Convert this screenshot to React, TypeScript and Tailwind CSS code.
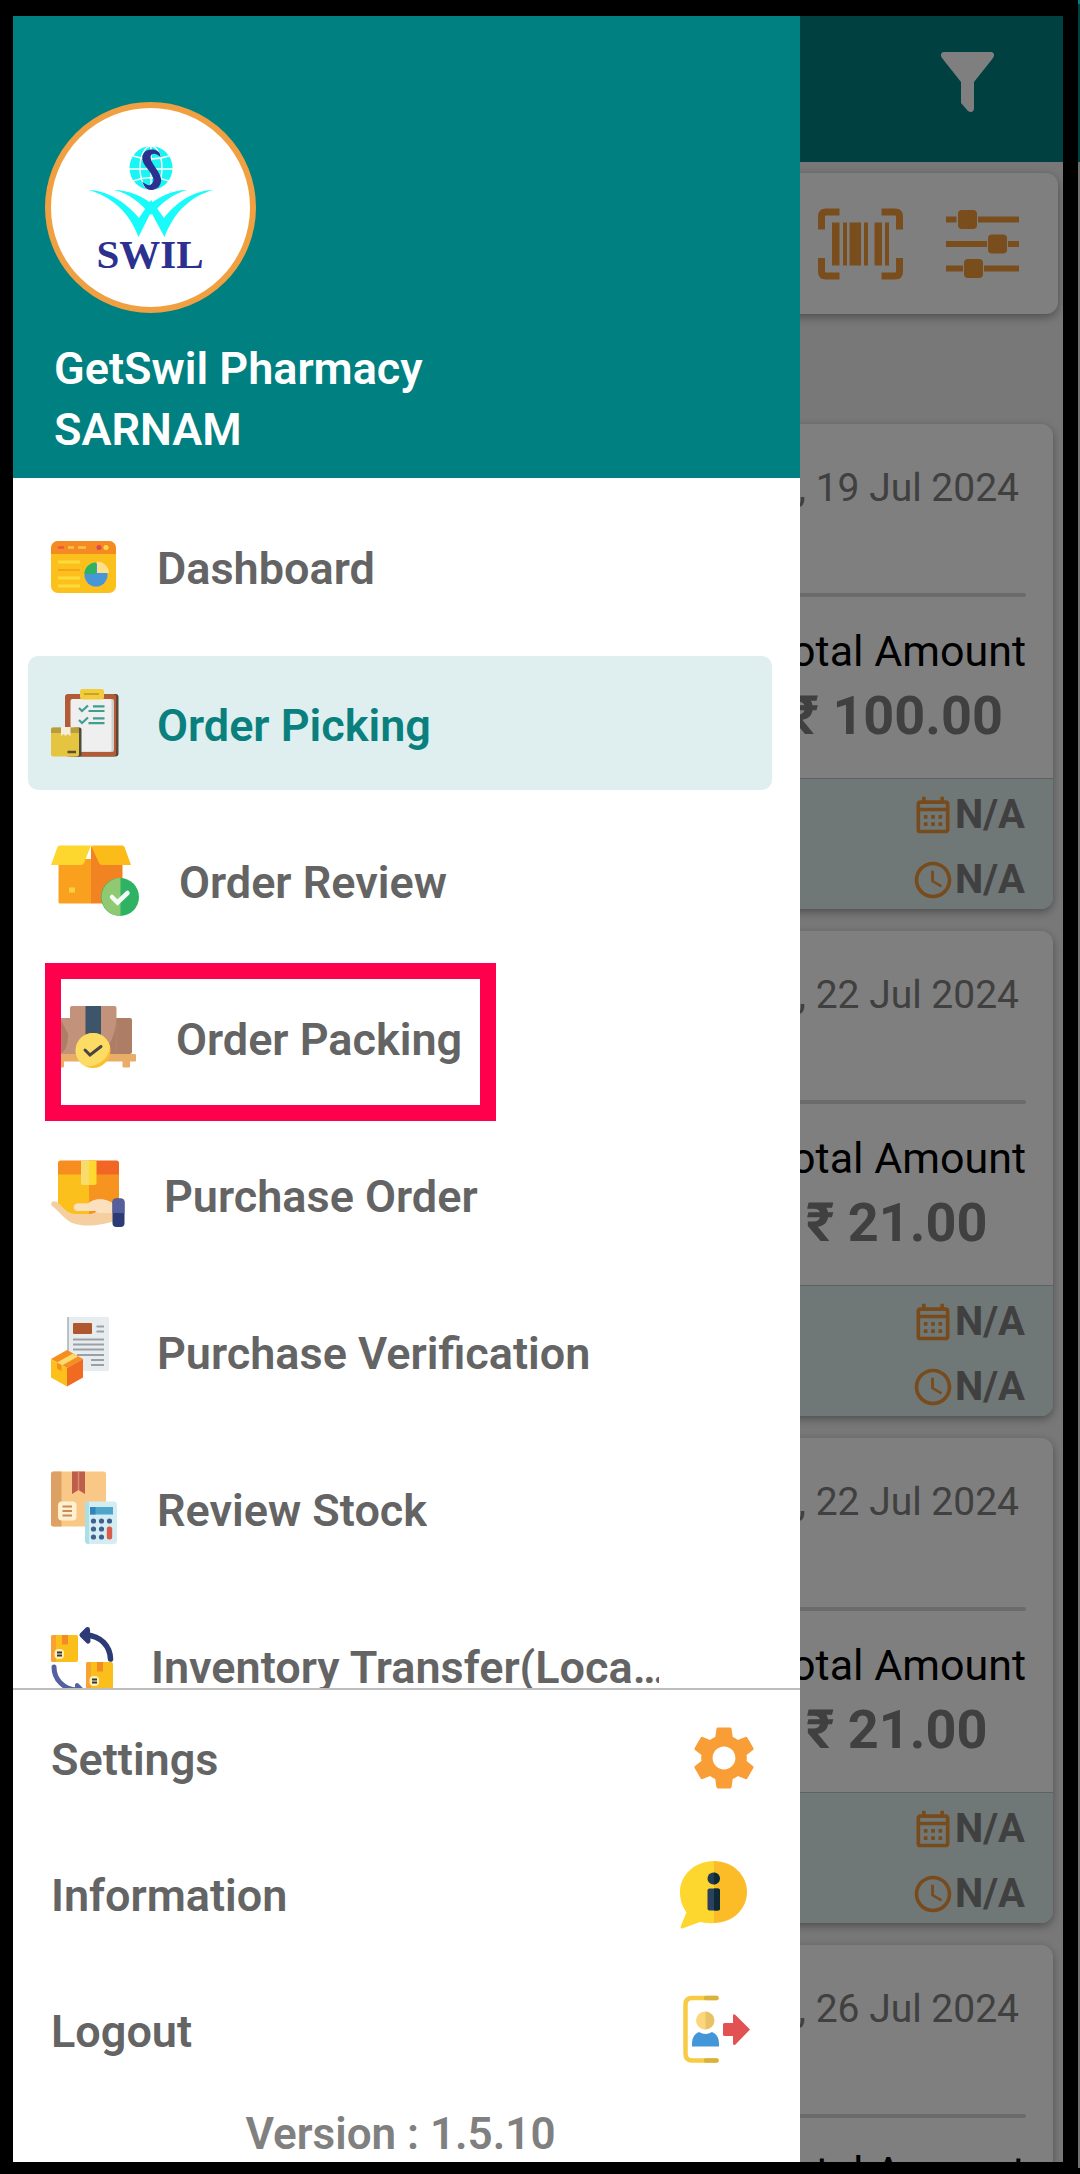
import type { ReactNode } from "react";
import {
  MdAccessTime,
  MdOutlineCalendarMonth,
  MdSettings,
} from "react-icons/md";

type MenuItem = {
  label: string;
  icon: ReactNode;
  active?: boolean;
  marked?: boolean;
};

type Order = {
  date: string;
  amount: string;
};

const orders: Order[] = [
  { date: ", 19 Jul 2024", amount: "₹ 100.00" },
  { date: ", 22 Jul 2024", amount: "₹ 21.00" },
  { date: ", 22 Jul 2024", amount: "₹ 21.00" },
  { date: ", 26 Jul 2024", amount: "₹ 21.00" },
];

function SwilLogo() {
  return (
    <svg viewBox="0 0 211 211" className="size-full" role="img" aria-label="SWIL">
      <circle cx="105.5" cy="105.5" r="102.5" fill="#fff" stroke="#f0a040" strokeWidth="6" />
      <ellipse cx="106" cy="66" rx="21.5" ry="22" fill="#19f5f5" />
      <g fill="none" stroke="#fff" strokeWidth="1.4">
        <ellipse cx="106" cy="66" rx="11" ry="22" />
        <path d="M84 67h44M88 54q18 6 36 0M88 79q18-7 36 0M106 44v44" />
      </g>
      <path
        d="M114 52.500C113 48 101 46 98.500 54C96 63 111 70 109.500 79C108.500 85 103 85 100 83C103 89 114 88 115 79C116 70 103 62 104.500 54C105.500 49.500 111 50 114 52.500Z"
        fill="#2c3190"
        stroke="#2c3190"
        strokeWidth="2.200"
      />
      <g fill="#19fbfb">
        <path d="M43.500 88C61 88 81 100 94 116L106 98L119 116C131 100 150 88 168 88C147 94 130 108 119.500 135L106 110L93.500 135C84 109 65 94 43.500 88Z" />
        <path d="M69 88C84 88 98 95 106 101C115 95 127 88 142 88C127 92 117 101 106 113C96 102 86 92 69 88Z" />
      </g>
      <text
        x="105"
        y="166"
        textAnchor="middle"
        className="fill-[#2c3190] font-['Liberation_Serif',serif] text-[41px] font-bold"
      >
        SWIL
      </text>
    </svg>
  );
}

function DashboardIcon() {
  return (
    <svg viewBox="0 0 75 82" className="h-[82px] w-[75px]" aria-hidden="true">
      <rect y="16" width="65" height="52" rx="7" fill="#fbc01c" />
      <path d="M0 29v-6a7 7 0 0 1 7-7h51a7 7 0 0 1 7 7v6z" fill="#f58a22" />
      <g strokeWidth="2.500">
        <path d="M7 22.500h6" stroke="#e9573f" />
        <path d="M17 22.500h6M27 22.500h8" stroke="#fcc34a" />
        <path d="M7 37h22M7 53h22M7 61h22" stroke="#ffdb3a" strokeWidth="3" />
        <path d="M7 45h22" stroke="#f9a11f" strokeWidth="2" />
      </g>
      <circle cx="48" cy="22.500" r="2.500" fill="#e0455a" />
      <circle cx="55" cy="22.500" r="2.500" fill="#ffd84a" />
      <circle cx="45" cy="50" r="11.500" fill="#4797d8" />
      <path d="M33.500 49a11.500 11.500 0 0 1 11.500-11.500V49z" fill="#2eb264" />
      <path d="M46 48V36.500a12 12 0 0 1 12 11.500z" fill="#ffe08a" />
    </svg>
  );
}

function PickingIcon() {
  return (
    <svg viewBox="0 0 75 82" className="h-[82px] w-[75px]" aria-hidden="true">
      <rect x="17" y="12" width="50.500" height="62.500" rx="3" fill="#5b4637" />
      <rect x="14" y="12" width="51" height="62.500" rx="3" fill="#b15c35" />
      <rect x="22" y="17" width="41" height="53" rx="2" fill="#cfcfcf" />
      <rect x="19.500" y="17" width="41" height="52.500" rx="2" fill="#efefef" />
      <rect x="29" y="7" width="24" height="10.500" rx="2.500" fill="#f2cc3a" />
      <path d="M33 12h15" stroke="#c9a227" strokeWidth="2" />
      <g fill="none" stroke="#3f9e92" strokeWidth="2.200">
        <path d="m28 26 3 3 6-5.500M28 38l3 3 6-5.500" />
        <path d="M42 24.300h11.500M37.500 29H53.500M42 36.300h11.500M37.500 41.200H53.500" />
      </g>
      <rect x="22" y="45.500" width="8.500" height="29" rx="2" fill="#4b4c3f" />
      <rect y="45.500" width="28" height="29" rx="2" fill="#e5c440" />
      <path d="M0 51v-3.500a2 2 0 0 1 2-2h24a2 2 0 0 1 2 2V51z" fill="#b79d3c" />
      <path d="M10 45h9.500v9l-3-2-2 2-2-2-2.500 2z" fill="#f5eedc" />
      <path d="M16.500 70H25" stroke="#5b4f35" strokeWidth="2.500" />
    </svg>
  );
}

function ReviewIcon() {
  return (
    <svg viewBox="0 0 97 82" className="h-[82px] w-[97px]" aria-hidden="true">
      <path d="M7.500 20H40v44.500H9a1.500 1.500 0 0 1-1.500-1.500z" fill="#f9a11f" />
      <path d="M40 8h31.500v56.500H40z" fill="#f28322" />
      <path d="M9 6.500h31L33 24q-1 2-3 2H0L6.500 8q.5-1.500 2.500-1.500z" fill="#fdd62e" />
      <path d="M40 6.500h31q2 0 2.500 1.500L80 26H51q-2 0-3-2z" fill="#fbbc1a" />
      <rect x="18" y="48.500" width="6" height="5" fill="#fdcf3a" />
      <circle cx="69" cy="58" r="19" fill="#2eb264" />
      <path d="M69.500 39a19 19 0 0 0 0 38z" fill="#8fca72" />
      <path d="m61 58 5.500 5.500L76.500 54" fill="none" stroke="#f2fbf6" strokeWidth="4.500" strokeLinecap="round" />
    </svg>
  );
}

function PackingIcon() {
  return (
    <svg viewBox="0 0 94 82" className="h-[82px] w-[94px]" aria-hidden="true">
      <rect x="3" y="22" width="24" height="36" rx="2" fill="#ad7d66" />
      <rect x="58" y="22" width="23" height="36" rx="2" fill="#ad7d66" />
      <path d="M9 22h11v36H9q8-4 8-20z" fill="#c2937a" />
      <rect x="19" y="10" width="46.500" height="48" rx="2" fill="#c2937a" />
      <path d="M65.500 22v36H50q14-12 15.500-36z" fill="#ad7d66" />
      <rect x="34.500" y="10" width="15.500" height="30" fill="#3d556b" />
      <rect y="58" width="85" height="7.500" rx="1" fill="#e9ad68" />
      <path d="M5.500 65H13v5.500q0 1-1 1H6.500q-1 0-1-1zM71.500 65H79v5.500q0 1-1 1h-5.500q-1 0-1-1z" fill="#e9ad68" />
      <circle cx="42" cy="54.500" r="17.500" fill="#fdc02c" />
      <path d="M42 37a17 17 0 0 1 17 14A22 22 0 0 1 34 70a17.500 17.500 0 0 1 8-33z" fill="#fcdc65" />
      <path d="m34 54 5 5 11-8.500" fill="none" stroke="#4b4540" strokeWidth="3" strokeLinecap="round" />
    </svg>
  );
}

function PurchaseOrderIcon() {
  return (
    <svg viewBox="0 0 82 82" className="h-[82px] w-[82px]" aria-hidden="true">
      <path d="M7 20h31v42H17Q7 62 7 52z" fill="#fbc01c" />
      <path d="M38 20h30v32L38 62z" fill="#f7941f" />
      <path d="M7 21.500V10q0-2.500 2.500-2.500H38v14z" fill="#f78d1e" />
      <path d="M38 7.500h27.500Q68 7.500 68 10v11.500H38z" fill="#f06622" />
      <path d="M30 7.500h8V32h-6q-2 0-2-2z" fill="#fadc6e" />
      <path d="M38 7.500h7.500V30q0 2-2 2H38z" fill="#ffd92f" />
      <path
        d="M1 53c-2.500-3 1-6.500 5-4 5.500 4 9 11.500 18 12h10c8 0 10 0 11-3H27c-6 0-6-7.500 0-7.500h10c8-6 16-5 26 0v18c-9 2-16 4-26 4C15 72.500 14 63 1 53z"
        fill="#f5cfa0"
      />
      <path d="M23 54q0-3.500 4-3.500h10c8-6 16-5 26 0V60H46l-1-2H27q-4 0-4-4z" fill="#fae0bd" />
      <rect x="61.500" y="45.500" width="12" height="28.500" rx="4" fill="#2c3a75" />
      <path d="M61.500 60V49.500q0-4 4-4h4q4 0 4 4V60z" fill="#555f9c" />
    </svg>
  );
}

function VerificationIcon() {
  return (
    <svg viewBox="0 0 75 82" className="h-[82px] w-[75px]" aria-hidden="true">
      <rect x="16.500" y="7" width="41.500" height="54" rx="1" fill="#e7ecee" />
      <path d="M17 7v40" stroke="#a9b2b6" strokeWidth="1.500" />
      <rect x="22" y="13" width="19" height="11" rx="1" fill="#b1572f" />
      <path
        d="M45.500 16.500h7.500M45.500 21.500h7.500M22 29.500h31M22 34.500h31M22 39.500h31M26 45h27M40 50h13M40 55h13"
        stroke="#9aa0a6"
        strokeWidth="2.200"
      />
      <path d="m16 40 16 9-16 9-16-9z" fill="#f78d1e" />
      <path d="m0 49 16 9v18.500L0 67.500z" fill="#fbc01c" />
      <path d="m32 49-16 9v18.500l16-9z" fill="#f06a22" />
      <path d="m6 52.500 16-9 5 3-16 9z" fill="#fadc6e" />
      <path d="m6 52.500 4.500 2.500v6L6 58.500z" fill="#f78d1e" />
    </svg>
  );
}

function StockIcon() {
  return (
    <svg viewBox="0 0 75 82" className="h-[82px] w-[75px]" aria-hidden="true">
      <rect y="4.500" width="55" height="55" rx="2.500" fill="#f9c887" />
      <path d="M10.500 4.500v55h-8Q0 59.500 0 57V7q0-2.500 2.500-2.500z" fill="#dda263" />
      <path d="M21 4.500h13V27l-6.500-4-6.500 4z" fill="#bd5e4c" />
      <path d="M27.500 4.500V23" stroke="#e08a6c" strokeWidth="1.500" />
      <rect x="7" y="34.500" width="18.500" height="19" rx="4" fill="#fff0cf" />
      <path d="M11.500 39.500h9.500M11.500 44h9.500M11.500 48.500h9.500" stroke="#c98a5c" strokeWidth="1.800" />
      <rect x="34" y="34.500" width="32" height="42.500" rx="3.500" fill="#d3edf3" />
      <path d="M38 34.500V77q-4 0-4-3.500V38q0-3.500 4-3.500z" fill="#abdfe8" />
      <rect x="39" y="40" width="23" height="7.500" fill="#4fa6cb" />
      <rect x="39" y="40" width="5.500" height="7.500" fill="#3284bd" />
      <g fill="#41608f">
        {[42.5, 50.5, 58.5].map((cx) => (
          <circle key={cx} cx={cx} cy="54" r="2.600" />
        ))}
        {[42.5, 50.5].map((cx) => (
          <circle key={cx} cx={cx} cy="62" r="2.600" />
        ))}
        {[42.5, 50.5].map((cx) => (
          <circle key={cx} cx={cx} cy="70" r="2.600" />
        ))}
      </g>
      <rect x="55.800" y="59.500" width="5.400" height="13" rx="2.500" fill="#dc5a4a" />
    </svg>
  );
}

function TransferBox() {
  return (
    <>
      <rect width="27" height="27" rx="2" fill="#fbbf1c" />
      <path d="M5 0v27H2q-2 0-2-2V2q0-2 2-2z" fill="#f7a233" />
      <path d="M11 0h6v9.500h-6z" fill="#f58a22" />
      <rect x="3.500" y="14" width="9.500" height="10" rx="4" fill="#fff0b5" />
      <path d="M6 17.500h5M6 20.500h5" stroke="#33343c" strokeWidth="2" />
    </>
  );
}

function TransferIcon() {
  return (
    <svg viewBox="0 0 69 82" className="h-[82px] w-[69px]" aria-hidden="true">
      <g transform="translate(0 11)">
        <TransferBox />
      </g>
      <g transform="translate(35 38)">
        <TransferBox />
      </g>
      <path d="M35 11C50 12 59 22 59.500 35" fill="none" stroke="#2c3a75" strokeWidth="5.500" strokeLinecap="round" />
      <path d="M36.500 5.500 31 11l6 6z" fill="#2c3a75" stroke="#2c3a75" strokeWidth="5" strokeLinejoin="round" />
      <path d="M3 43C3 55 12 65 26 66" fill="none" stroke="#5560a0" strokeWidth="5" strokeLinecap="round" />
      <path d="m26 61 5 5-5 5z" fill="#5560a0" stroke="#5560a0" strokeWidth="4" strokeLinejoin="round" />
    </svg>
  );
}

function InformationIcon() {
  return (
    <svg viewBox="0 0 82 74" className="h-[74px] w-[82px]" aria-hidden="true">
      <path d="M34 4C15 4 0 18 0 35c0 8 2.500 15 6.500 20.500L.8 69c-.8 2 .4 3 2.200 2.200L20 65c4.500 1 9 1.500 14 1z" fill="#fdd62e" />
      <path d="M34 4c18.500 0 33 14 33 31S52.500 66 34 66z" fill="#fbbc27" />
      <circle cx="33.500" cy="21.500" r="6" fill="#233b55" />
      <rect x="27.500" y="31.500" width="12.500" height="22" rx="2" fill="#2b4160" />
      <path d="M34 15.500a6 6 0 0 1 0 12zM34 31.500h4q2 0 2 2v18q0 2-2 2h-4z" fill="#0f2a35" />
    </svg>
  );
}

function LogoutIcon() {
  return (
    <svg viewBox="0 0 82 74" className="h-[74px] w-[82px]" aria-hidden="true">
      <path d="M36.500 5H12Q5.500 5 5.500 11.500v49Q5.500 67.500 12 67.500h24.500" fill="none" stroke="#f8cb45" strokeWidth="4.500" strokeLinecap="round" />
      <path d="M26 5h10.500M26 67.500h10.500" stroke="#d9b23c" strokeWidth="4.500" strokeLinecap="round" />
      <circle cx="25" cy="27.500" r="9" fill="#fbd67c" />
      <path d="M25.500 18.500a9 9 0 0 1 0 18z" fill="#e8c265" />
      <path d="M12 53.500V50q0-8 7-11 6.500 4 13 0 7 3 7 11v3.500z" fill="#4396d8" />
      <path d="M44.500 30H53v-7q0-3 2.500-1L70 36.500 55.500 51.500Q53 53 53 50v-7h-8.500q-1.500 0-1.500-1.500v-10q0-1.500 1.500-1.500z" fill="#e25252" />
    </svg>
  );
}

function FilterIcon() {
  return (
    <svg viewBox="0 0 53 60" className="h-[60px] w-[53px] fill-white" aria-hidden="true">
      <path d="M3 0h47c3 0 4 3 2 6L33 30v26c0 4-3 5-6 3l-7-8V30L1 6C-1 3 0 0 3 0z" />
    </svg>
  );
}

function BarcodeIcon() {
  return (
    <svg viewBox="0 0 85 72" className="h-[72px] w-[85px]" aria-hidden="true">
      <path
        d="M21.500 4H8Q3.500 4 3.500 8.500V21.500M63.500 4H77Q81.500 4 81.500 8.500V21.500M21.500 68H8Q3.500 68 3.500 63.500V50M63.500 68H77Q81.500 68 81.500 63.500V50"
        fill="none"
        stroke="#f29a38"
        strokeWidth="7"
      />
      <path
        d="M14 14.500h7.500v43H14zM25 14.500h4v43h-4zM31.500 14.500h11.500v43H31.500zM46 14.500h4v43h-4zM56.500 14.500H64v43h-7.500zM67 14.500h4v43h-4z"
        fill="#f29a38"
      />
    </svg>
  );
}

function SlidersIcon() {
  return (
    <svg viewBox="0 0 73 68" className="h-[68px] w-[73px] fill-[#f29a38]" aria-hidden="true">
      <path d="M0 6.500h10.500v6H0zM32 6.500h41v6H32zM0 31h41v6H0zM62 31h11v6H62zM0 55.500h17v6H0zM38 55.500h35v6H38z" />
      <rect x="12" width="19" height="19" rx="4" />
      <rect x="42" y="24.500" width="19" height="19" rx="4" />
      <rect x="18" y="49" width="19" height="19" rx="4" />
    </svg>
  );
}

const menuItems: MenuItem[] = [
  { label: "Dashboard", icon: <DashboardIcon /> },
  { label: "Order Picking", icon: <PickingIcon />, active: true },
  { label: "Order Review", icon: <ReviewIcon /> },
  { label: "Order Packing", icon: <PackingIcon />, marked: true },
  { label: "Purchase Order", icon: <PurchaseOrderIcon /> },
  { label: "Purchase Verification", icon: <VerificationIcon /> },
  { label: "Review Stock", icon: <StockIcon /> },
  { label: "Inventory Transfer(Loca…", icon: <TransferIcon /> },
];

const footerItems: MenuItem[] = [
  { label: "Settings", icon: <MdSettings className="size-[76px] text-[#f99d37]" /> },
  { label: "Information", icon: <InformationIcon /> },
  { label: "Logout", icon: <LogoutIcon /> },
];

function OrderCard({ order }: { order: Order }) {
  return (
    <article className="shrink-0 overflow-hidden rounded-[12px] bg-white shadow-[0_3px_8px_rgba(0,0,0,0.35)]">
      <p className="pt-10 pr-[34px] text-right text-[39px] leading-[48px] text-[#808080]">
        {order.date}
      </p>
      <div className="mt-[81px] mr-[27px] ml-7 h-1 rounded-full bg-[#d6d6d6]" />
      <div className="mt-[29px] mr-[27px] flex justify-end">
        <div className="flex flex-col items-center">
          <p className="text-[43px] leading-[50px] text-black">Total Amount</p>
          <p className="mt-2 text-[54px] leading-[64px] font-bold text-[#808080]">
            {order.amount}
          </p>
        </div>
      </div>
      <div className="mt-[30px] border-t border-[#b9c4c4] bg-[#dfeeee] pr-7 text-[40px] font-bold text-[#808080]">
        <p className="flex h-[65px] items-center justify-end pt-[6px]">
          <MdOutlineCalendarMonth className="size-[44px] text-[#f0963a]" />
          N/A
        </p>
        <p className="flex h-[65px] items-center justify-end pt-[6px]">
          <MdAccessTime className="size-[44px] text-[#f0963a]" />
          N/A
        </p>
      </div>
    </article>
  );
}

function OrdersScreen() {
  return (
    <main className="flex h-full flex-col bg-[#f0f0f0]">
      <header className="flex h-[146px] shrink-0 items-center justify-end bg-[#008080] pr-[69px] pb-[14px]">
        <button type="button" aria-label="Filter">
          <FilterIcon />
        </button>
      </header>
      <div className="mt-[11px] mr-[5px] flex h-[141px] shrink-0 items-center justify-end gap-[43px] rounded-[12px] bg-white pr-[39px] shadow-[0_3px_10px_rgba(0,0,0,0.35)]">
        <button type="button" aria-label="Scan barcode">
          <BarcodeIcon />
        </button>
        <button type="button" aria-label="Adjust list">
          <SlidersIcon />
        </button>
      </div>
      <section className="mt-[110px] mr-[10px] flex flex-col gap-[22px]">
        {orders.map((order, index) => (
          <OrderCard key={index} order={order} />
        ))}
      </section>
    </main>
  );
}

function Drawer() {
  return (
    <aside className="absolute inset-y-0 left-0 flex w-3/4 max-w-[787px] flex-col bg-white text-[45px] font-semibold text-[#646464]">
      <header className="shrink-0 bg-[#008080] pt-[86px] pb-[18px] leading-[61px] text-white">
        <div className="ml-8 size-[211px]">
          <SwilLogo />
        </div>
        <p className="mt-[25px] ml-[41px]">GetSwil Pharmacy</p>
        <p className="ml-[41px]">SARNAM</p>
      </header>

      <nav className="min-h-0 flex-1 overflow-hidden pt-[21px] pr-7 pl-[15px]">
        <ul className="flex flex-col gap-[23px]">
          {menuItems.map((item) => (
            <li key={item.label} className="relative">
              <button
                type="button"
                className={`flex h-[134px] w-full items-center gap-[31px] rounded-[10px] pl-[23px] text-left ${
                  item.active ? "bg-[#dfefef] text-[#0a807e]" : ""
                }`}
              >
                <span className="shrink-0">{item.icon}</span>
                <span className="max-w-[508px] overflow-hidden pt-[6px] whitespace-nowrap">
                  {item.label}
                </span>
              </button>
              {item.marked && (
                <div className="absolute -top-[7px] left-[17px] h-[158px] w-[451px] border-16 border-[#ff004d]" />
              )}
            </li>
          ))}
        </ul>
      </nav>

      <footer className="shrink-0 border-t-2 border-[#bdbdbd]">
        {footerItems.map((item) => (
          <button
            key={item.label}
            type="button"
            className="flex h-[136px] w-full items-center justify-between pr-[38px] pl-[38px]"
          >
            <span className="pt-1">{item.label}</span>
            {item.icon}
          </button>
        ))}
        <p className="h-16 pt-2 pr-3 text-center text-[44px] leading-[56px] text-[#808080]">
          Version : 1.5.10
        </p>
      </footer>
    </aside>
  );
}

export default function App() {
  return (
    <div className="flex h-screen overflow-hidden bg-black font-[Roboto,sans-serif]">
      <div className="min-w-0 flex-1 pt-4 pr-[15px] pb-3 pl-[13px]">
        <div className="relative h-full overflow-hidden">
          <OrdersScreen />
          <div className="absolute inset-0 bg-black/50" />
          <Drawer />
        </div>
      </div>
      <div className="flex w-[2px] flex-col pb-[6px]">
        <div className="h-1 bg-[#008080]" />
        <div className="h-[158px] bg-[#004040]" />
        <div className="flex-1 bg-[#707070]" />
      </div>
    </div>
  );
}
